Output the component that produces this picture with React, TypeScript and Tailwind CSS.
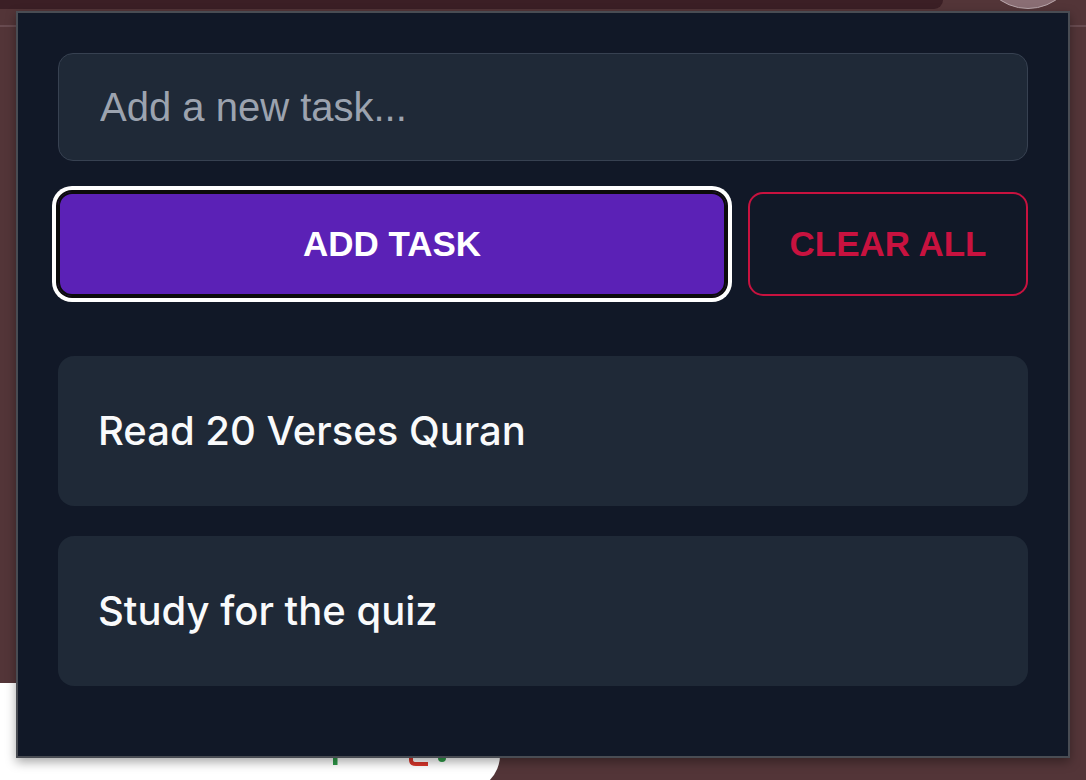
import React, { useState } from 'react';

const tasks = ['Read 20 Verses Quran', 'Study for the quiz'];

const Backdrop: React.FC = () => (
  <>
    {/* tab strip of the browser behind the popup */}
    <div className="absolute left-0 top-0 w-[943px] h-[9px] bg-[#3b1f25] rounded-br-[10px]" />
    <div className="absolute left-[978px] top-[-91px] w-[100px] h-[100px] rounded-full bg-[#8a6e74] border border-[#b9a6ab]" />
    <div className="absolute left-0 top-[25px] w-full h-[2px] bg-[#684b50]" />
    {/* page content peeking out below */}
    <div className="absolute left-0 top-[683px] w-[500px] h-[108px] bg-white rounded-br-[36px]" />
    <svg className="absolute left-[320px] top-[750px]" width="140" height="20" viewBox="0 0 140 20">
      <rect x="7" y="4" width="17" height="4" rx="2" fill="#e0402f" />
      <rect x="13" y="6" width="4.5" height="9" fill="#2e9a48" />
      <path d="M91 4 L91 10 Q91 14 96 14 L108 14" stroke="#d9352a" strokeWidth="4" fill="none" />
      <circle cx="122" cy="8" r="4" fill="#2e9a48" />
    </svg>
  </>
);

const TaskPopup: React.FC = () => {
  const [text, setText] = useState('');

  return (
    <div className="absolute left-[16px] top-[11px] w-[1054px] h-[747px] border-2 border-[rgba(120,120,120,0.55)] bg-[#111827] shadow-[0_4px_10px_rgba(0,0,0,0.35)] px-[40px] pt-[40px] flex flex-col">
      <input
        value={text}
        onChange={(e) => setText(e.target.value)}
        placeholder="Add a new task..."
        className="w-full h-[108px] shrink-0 rounded-[15px] border border-[#374151] bg-[#1f2937] pl-[41px] text-[40px] text-white font-['Liberation_Sans',Arial,sans-serif] placeholder:text-[#9ca3af] outline-none"
      />

      <div className="flex gap-[22px] mt-[31px] h-[104px] shrink-0">
        <button className="flex-1 rounded-[14px] bg-[#5b21b6] text-white font-bold text-[35px] uppercase font-['Liberation_Sans',Arial,sans-serif] shadow-[inset_0_0_0_2px_#0b0b0b,0_0_0_2px_#0b0b0b,0_0_0_6px_#ffffff]">
          Add Task
        </button>
        <button className="w-[280px] rounded-[15px] border-2 border-[#c8123f] text-[#c8123f] font-bold text-[35px] uppercase font-['Liberation_Sans',Arial,sans-serif]">
          Clear All
        </button>
      </div>

      <div className="flex flex-col gap-[30px] mt-[60px]">
        {tasks.map((t) => (
          <div
            key={t}
            className="h-[150px] rounded-[16px] bg-[#1f2937] pl-[40px] flex items-center text-[40px] font-medium text-[#f9fafb] font-['Inter','Noto_Sans',sans-serif]"
          >
            {t}
          </div>
        ))}
      </div>
    </div>
  );
};

export default function App() {
  return (
    <div className="relative w-[1086px] h-[780px] overflow-hidden bg-[#533538]">
      <Backdrop />
      <TaskPopup />
    </div>
  );
}
